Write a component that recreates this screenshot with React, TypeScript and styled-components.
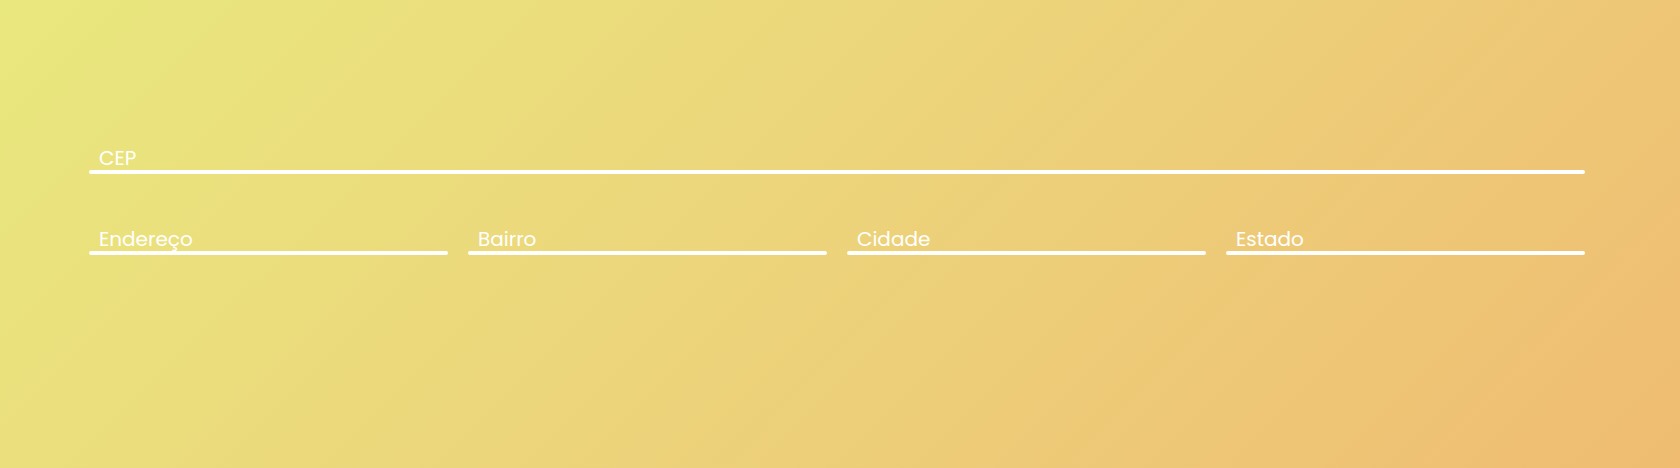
import React from 'react'
import styled, { createGlobalStyle } from 'styled-components'

const GlobalStyle = createGlobalStyle`
  html, body {
    margin: 0;
    padding: 0;
  }
  body {
    font-family: Poppins, Inter, "Noto Sans", sans-serif;
  }
`

const Page = styled.div`
  box-sizing: border-box;
  min-height: 100vh;
  padding: 144px 95px 0 89px;
  background: linear-gradient(135deg, #e9e87e 0%, #ecd57b 45%, #efbc72 100%);
`

const Form = styled.form`
  display: flex;
  flex-direction: column;
  gap: 51px;
`

const Row = styled.div<{ $cols: number }>`
  display: grid;
  grid-template-columns: repeat(${(p) => p.$cols}, 1fr);
  column-gap: 20px;
`

const Field = styled.label`
  display: flex;
  flex-direction: column;
`

const Label = styled.span`
  padding: 2px 0 0 10px;
  font-size: 20px;
  font-weight: 400;
  line-height: 24px;
  color: #ffffff;
`

const Underline = styled.div`
  height: 4px;
  border-radius: 2px;
  background: #ffffff;
`

const fields = [['CEP'], ['Endereço', 'Bairro', 'Cidade', 'Estado']]

export default function App() {
  return (
    <>
      <GlobalStyle />
      <Page>
        <Form>
          {fields.map((row, i) => (
            <Row key={i} $cols={row.length}>
              {row.map((name) => (
                <Field key={name}>
                  <Label>{name}</Label>
                  <Underline />
                </Field>
              ))}
            </Row>
          ))}
        </Form>
      </Page>
    </>
  )
}
